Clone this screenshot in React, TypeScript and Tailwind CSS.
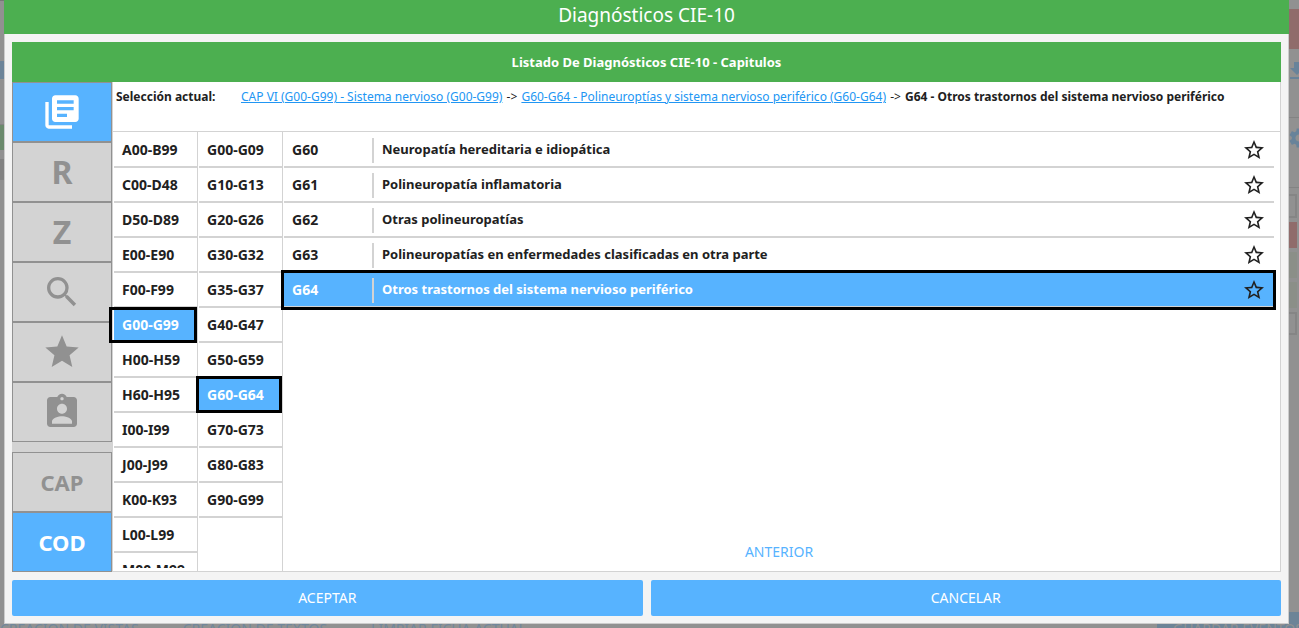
import React, { useState } from 'react'
import { MdAssignmentInd, MdFileDownload, MdLibraryBooks, MdSearch, MdSettings, MdStar, MdStarBorder } from 'react-icons/md'

const chapters = [
  'A00-B99', 'C00-D48', 'D50-D89', 'E00-E90', 'F00-F99', 'G00-G99', 'H00-H59',
  'H60-H95', 'I00-I99', 'J00-J99', 'K00-K93', 'L00-L99', 'M00-M99',
]

const groups = [
  'G00-G09', 'G10-G13', 'G20-G26', 'G30-G32', 'G35-G37', 'G40-G47',
  'G50-G59', 'G60-G64', 'G70-G73', 'G80-G83', 'G90-G99',
]

const diagnoses = [
  { code: 'G60', name: 'Neuropatía hereditaria e idiopática' },
  { code: 'G61', name: 'Polineuropatía inflamatoria' },
  { code: 'G62', name: 'Otras polineuropatías' },
  { code: 'G63', name: 'Polineuropatías en enfermedades clasificadas en otra parte' },
  { code: 'G64', name: 'Otros trastornos del sistema nervioso periférico' },
]

const tools = [
  { id: 'chapters', label: 'Capítulos', content: <MdLibraryBooks size={40} /> },
  { id: 'r', label: 'R', content: 'R' },
  { id: 'z', label: 'Z', content: 'Z' },
  { id: 'search', label: 'Buscar', content: <MdSearch size={40} /> },
  { id: 'favorites', label: 'Favoritos', content: <MdStar size={40} /> },
  { id: 'patient', label: 'Paciente', content: <MdAssignmentInd size={40} /> },
]

function SideButton({ active, label, className, onClick, children }: {
  active: boolean
  label: string
  className: string
  onClick: () => void
  children: React.ReactNode
}) {
  return (
    <button
      type="button"
      aria-label={label}
      onClick={onClick}
      className={`flex h-[60px] w-full shrink-0 items-center justify-center border border-[#919191] font-bold ${className} ${active ? 'bg-[#57b3ff] text-white' : 'bg-[#d3d3d3] text-[#919191]'}`}
    >
      {children}
    </button>
  )
}

function CodeColumn({ codes, selected, onSelect, frame }: {
  codes: string[]
  selected: string
  onSelect: (code: string) => void
  frame: string
}) {
  return (
    <div className="w-[85px] shrink-0 border-r border-[#d3d3d3] pt-px pb-[3px] pl-px">
      <ul className="h-full overflow-y-clip">
        {codes.map((code) => (
          <li key={code} className="relative">
            <button
              type="button"
              onClick={() => onSelect(code)}
              className={`flex h-[35px] w-full items-center border-b-2 border-[#d3d3d3] pl-2 text-sm font-bold ${code === selected ? 'bg-[#57b3ff] text-white' : ''}`}
            >
              {code}
            </button>
            {code === selected && <span className={`pointer-events-none absolute z-10 border-3 border-black ${frame}`} />}
          </li>
        ))}
      </ul>
    </div>
  )
}

// Dimmed application behind the dialog
function Backdrop() {
  return (
    <div aria-hidden="true" className="absolute inset-0 flex flex-col justify-between overflow-hidden bg-[#919191]">
      <div className="flex justify-between">
        <div className="w-1 overflow-hidden">
          <div className="h-[61px] border-t border-[#777777]" />
          <div className="h-[18px] bg-[#6c8499]" />
          <div className="h-[46px] border-b border-[#838383]" />
          <div className="h-[25px] bg-[#6b8a6c]" />
          <div className="mt-[9px] h-5 bg-[#828282]" />
          <div className="h-[30px] border-t border-[#838383]" />
        </div>
        <div className="w-2.5 overflow-hidden">
          <div className="h-[9px]" />
          <div className="h-10 bg-[#906c6b]" />
          <div className="flex h-[69px] items-start overflow-hidden border-b border-[#838383] pt-2.5 text-[#68839a]">
            <MdFileDownload size={24} className="-ml-1 shrink-0" />
          </div>
          <div className="flex h-[70px] items-start border-b border-[#838383] pt-2 text-[#68839a]">
            <MdSettings size={24} className="-ml-0.5 shrink-0" />
          </div>
          <div className="mt-1.5 mr-0.5 h-6 border-y-2 border-r-2 border-[#858585]" />
          <div className="mt-1 mr-0.5 h-[26px] bg-[#906c6b]" />
          <div className="mt-1 mr-0.5 h-[26px] bg-[#8b8f88]" />
          <div className="mt-1 mr-0.5 h-[26px] bg-[#8b8f88]" />
          <div className="mt-1 mr-0.5 h-[23px] border-2 border-l-0 border-[#858585]" />
        </div>
      </div>
      <div className="flex h-4 items-end justify-between text-sm leading-[10px] text-[#71879b]">
        <div className="flex h-1 gap-11">
          <span>CREACION DE VISTAS</span>
          <span>CREACION DE TEXTOS</span>
          <span>LIMPIAR FICHA ACTUAL</span>
        </div>
        <div className="h-4 w-[142px] overflow-hidden bg-[#6d8497] pt-3 pl-4 whitespace-nowrap text-[#919191]">
          GUARDAR EVENTOS
        </div>
      </div>
    </div>
  )
}

function App() {
  const [tool, setTool] = useState('chapters')
  const [mode, setMode] = useState('COD')
  const [chapter, setChapter] = useState('G00-G99')
  const [group, setGroup] = useState('G60-G64')
  const [diagnosis, setDiagnosis] = useState('G64')

  return (
    <div className="relative h-screen overflow-hidden pr-2.5 pb-1 pl-1 font-['Noto_Sans',sans-serif] text-[13px] text-[#212121]">
      <Backdrop />
      <div role="dialog" aria-labelledby="dialog-title" className="relative flex h-full flex-col bg-[#f4f4f4]">
        <header className="flex h-[34px] shrink-0 justify-center bg-[#4caf50] text-white">
          <h1 id="dialog-title" className="text-[19px] leading-[30px]">Diagnósticos CIE-10</h1>
        </header>

        <div className="flex min-h-0 flex-1 flex-col gap-2 border border-t-0 border-[#cccccc] px-[7px] pt-2 pb-[7px]">
          <section className="flex min-h-0 flex-1 flex-col">
            <h2 className="flex h-10 shrink-0 items-center justify-center bg-[#4caf50] pt-0.5 font-bold text-white">
              Listado De Diagnósticos CIE-10 - Capitulos
            </h2>
            <div className="flex min-h-0 flex-1">
              <nav className="flex w-[100px] shrink-0 flex-col justify-between bg-[#d3d3d3]">
                <div>
                  {tools.map((t) => (
                    <SideButton key={t.id} label={t.label} active={tool === t.id} className="text-[32px]" onClick={() => setTool(t.id)}>
                      {t.content}
                    </SideButton>
                  ))}
                </div>
                <div>
                  {['CAP', 'COD'].map((m) => (
                    <SideButton key={m} label={m} active={mode === m} className="text-[22px]" onClick={() => setMode(m)}>
                      {m}
                    </SideButton>
                  ))}
                </div>
              </nav>

              <div className="flex min-w-0 flex-1 flex-col border-x border-b border-[#d3d3d3] bg-white">
                <div className="flex h-[50px] shrink-0 border-b border-[#d3d3d3] pt-1.5 pl-[3px] text-xs leading-[18px]">
                  <span className="w-[125px] shrink-0 font-bold">Selección actual:</span>
                  <p>
                    <a href="#cap-vi" className="text-[#2196f3] underline">CAP VI (G00-G99) - Sistema nervioso (G00-G99)</a>
                    <span className="px-px">{' -> '}</span>
                    <a href="#g60-g64" className="text-[#2196f3] underline">G60-G64 - Polineuroptías y sistema nervioso periférico (G60-G64)</a>
                    <span className="px-px">{' -> '}</span>
                    <b>G64 - Otros trastornos del sistema nervioso periférico</b>
                  </p>
                </div>

                <div className="flex min-h-0 flex-1">
                  <CodeColumn codes={chapters} selected={chapter} onSelect={setChapter} frame="-top-px right-0 bottom-0 -left-[5px]" />
                  <CodeColumn codes={groups} selected={group} onSelect={setGroup} frame="-top-0.5 right-0 bottom-0 -left-[3px]" />
                  <div className="flex min-w-0 flex-1 flex-col justify-between pt-px pr-1.5 pb-[7px] pl-px">
                    <ul>
                      {diagnoses.map((d) => (
                        <li
                          key={d.code}
                          className={`relative flex h-[35px] items-center border-b-2 border-[#d3d3d3] pt-px pr-2 font-bold ${d.code === diagnosis ? 'bg-[#57b3ff] text-white' : ''}`}
                        >
                          <button type="button" onClick={() => setDiagnosis(d.code)} className="flex flex-1 items-center text-left">
                            <span className="w-[88px] pl-2 text-sm">{d.code}</span>
                            <span className="flex h-[25px] items-center border-l-2 border-[#d3d3d3] pl-2">{d.name}</span>
                          </button>
                          <button type="button" aria-label={`Favorito ${d.code}`} className="text-[#212121]">
                            <MdStarBorder size={24} />
                          </button>
                          {d.code === diagnosis && (
                            <span className="pointer-events-none absolute -top-[3px] -right-0.5 -bottom-1 -left-[3px] z-10 border-3 border-black" />
                          )}
                        </li>
                      ))}
                    </ul>
                    <button type="button" className="self-center text-sm leading-6 text-[#57b3ff]">ANTERIOR</button>
                  </div>
                </div>
              </div>
            </div>
          </section>

          <footer className="grid shrink-0 grid-cols-2 gap-2 text-sm text-white">
            <button type="button" className="h-9 rounded-xs bg-[#57b3ff]">ACEPTAR</button>
            <button type="button" className="h-9 rounded-xs bg-[#57b3ff]">CANCELAR</button>
          </footer>
        </div>
      </div>
    </div>
  )
}

export default App
